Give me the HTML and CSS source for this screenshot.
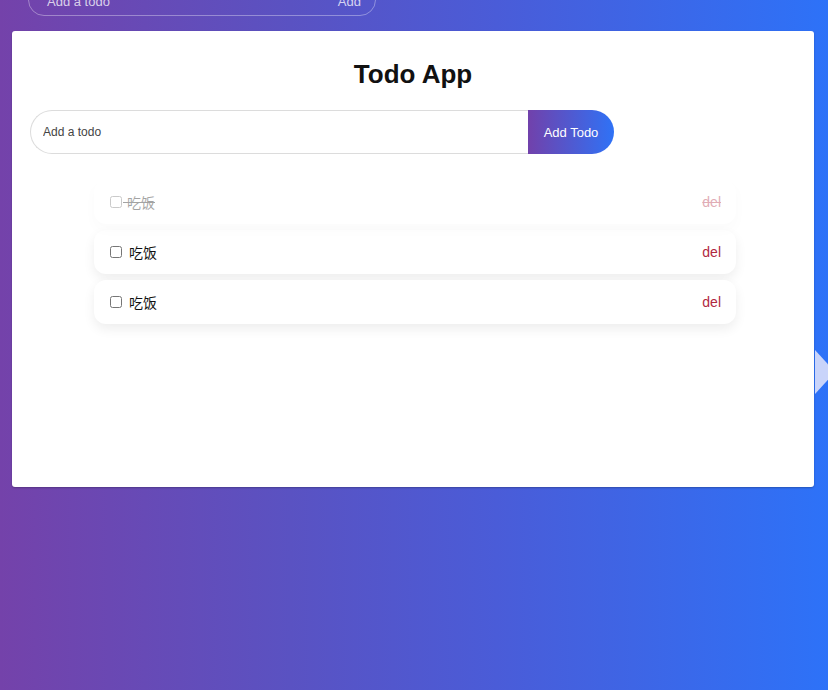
FILE: index.html
```html
<!DOCTYPE html>
<html lang="zh">
<head>
<meta charset="utf-8">
<title>Todo App</title>
<link rel="stylesheet" href="styles.css">
</head>
<body>
<div class="page">
  <div class="ghost">
    <span class="ghost-text">Add a todo</span>
    <span class="ghost-btn">Add</span>
  </div>
  <div class="card">
    <h1 class="title">Todo App</h1>
    <form class="add-form">
      <input class="add-input" type="text" placeholder="Add a todo">
      <button class="add-btn" type="button">Add Todo</button>
    </form>
    <ul class="list">
      <li class="item done">
        <input class="check" type="checkbox">
        <span class="label">吃饭</span>
        <span class="del">del</span>
      </li>
      <li class="item">
        <input class="check" type="checkbox">
        <span class="label">吃饭</span>
        <span class="del">del</span>
      </li>
      <li class="item">
        <input class="check" type="checkbox">
        <span class="label">吃饭</span>
        <span class="del">del</span>
      </li>
    </ul>
  </div>
  <div class="side-arrow"></div>
</div>
</body>
</html>
```

FILE: styles.css
```css
html, body {
  margin: 0;
  padding: 0;
  height: 100%;
}
body {
  font-family: "Liberation Sans", Arial, "Noto Sans CJK SC", sans-serif;
  background: linear-gradient(90deg, #7442aa 0%, #5a52c2 35%, #4a5cd8 60%, #2d72f8 100%);
  overflow: hidden;
}
.page {
  position: relative;
  display: flow-root;
  height: 690px;
}
.ghost {
  box-sizing: border-box;
  margin: -28px 0 0 28px;
  width: 348px;
  height: 44px;
  border: 1.5px solid rgba(255, 255, 255, 0.35);
  border-radius: 16px;
  display: flex;
  justify-content: space-between;
  align-items: flex-end;
  padding: 0 14px 6px 18px;
  color: rgba(255, 255, 255, 0.75);
  font-size: 13px;
}
.card {
  box-sizing: border-box;
  margin: 15px 14px 0 12px;
  height: 456px;
  background: #fff;
  border-radius: 3px;
  padding: 18px;
  box-shadow: 0 1px 2px rgba(0, 0, 0, 0.25);
}
.title {
  margin: 10px 0 21px;
  font-size: 26px;
  line-height: 30px;
  font-weight: bold;
  text-align: center;
  color: #111;
}
.add-form {
  display: flex;
  width: 584px;
  height: 44px;
  margin: 0;
}
.add-input {
  box-sizing: border-box;
  flex: 1;
  height: 44px;
  border: 1px solid #dcdcdc;
  border-right: none;
  border-radius: 22px 0 0 22px;
  padding: 0 12px;
  font-family: "Liberation Sans", Arial, sans-serif;
  font-size: 12px;
  outline: none;
}
.add-input::placeholder {
  color: #444;
}
.add-btn {
  width: 86px;
  height: 44px;
  border: none;
  border-radius: 0 22px 22px 0;
  background: linear-gradient(90deg, #7141ab, #2f72f6);
  color: #fff;
  font-family: "Liberation Sans", Arial, sans-serif;
  font-size: 13px;
  padding: 0;
}
.list {
  list-style: none;
  width: 642px;
  margin: 26px auto 0;
  padding: 0;
  display: flex;
  flex-direction: column;
  gap: 6px;
  transform: translateX(2px);
}
.item {
  box-sizing: border-box;
  height: 44px;
  display: flex;
  align-items: center;
  padding: 0 15px 0 16px;
  border-radius: 12px;
  background: #fff;
  box-shadow: 0 5px 12px rgba(0, 0, 0, 0.07);
  font-size: 14px;
  color: #111;
}
.check {
  width: 12px;
  height: 12px;
  margin: 0 7px 0 0;
}
.label {
  flex: 1;
  font-family: "Noto Sans CJK SC", sans-serif;
  font-size: 14px;
}
.del {
  color: #b1283f;
  font-size: 14px;
}
.item.done {
  opacity: 0.38;
  box-shadow: 0 6px 10px rgba(0, 0, 0, 0.035);
}
.item.done .label,
.item.done .del {
  text-decoration: line-through;
}
.item.done .check {
  margin-right: 1px;
}
.item.done .label::before {
  content: "\2002";
  letter-spacing: -3px;
}
.side-arrow {
  position: absolute;
  left: 815px;
  top: 350px;
  width: 0;
  height: 0;
  border-top: 22px solid transparent;
  border-bottom: 22px solid transparent;
  border-left: 20px solid #c9d4fa;
}
```
